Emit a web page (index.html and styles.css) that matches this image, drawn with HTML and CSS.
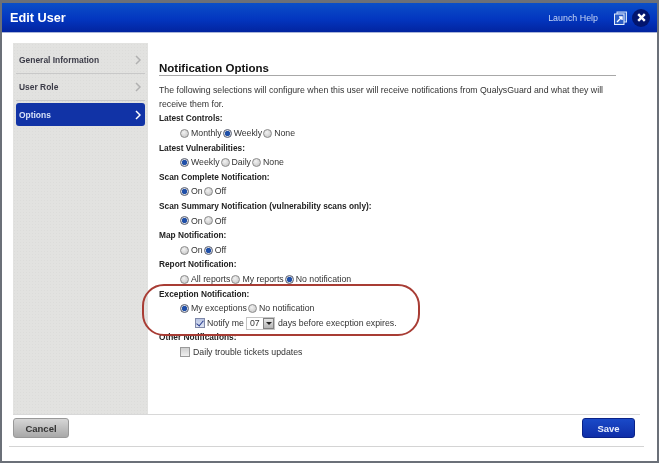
FILE: index.html
```html
<!DOCTYPE html>
<html lang="en">
<head>
<meta charset="utf-8">
<title>Edit User</title>
<link rel="stylesheet" href="styles.css">
</head>
<body>
<div class="window">
  <header class="titlebar">
    <h1 class="title">Edit User</h1>
    <span class="help">Launch Help</span>
    <svg class="popout" width="13" height="14" viewBox="0 0 13 14"><rect x="3" y="1" width="9.5" height="10" fill="#3f6fd0" stroke="#cfe0f8"/><rect x="0.5" y="3" width="9.5" height="10.5" fill="#2a5cc8" stroke="#e6eefc"/><path d="M3 11 L7.5 6.5 M5 6 H8 V9" fill="none" stroke="#fff" stroke-width="1.4"/></svg>
    <span class="close"><svg width="9" height="9" viewBox="0 0 9 9"><path d="M1.2 1.2 L7.8 7.8 M7.8 1.2 L1.2 7.8" stroke="#fff" stroke-width="2.4"/></svg></span>
  </header>
  <div class="main">
    <nav class="sidebar">
      <div class="nav-item"><span>General Information</span><svg class="chev" width="6" height="10" viewBox="0 0 6 10"><path d="M1 1 L5 5 L1 9" fill="none" stroke="#b0b0b0" stroke-width="1.5"/></svg></div>
      <div class="nav-item"><span>User Role</span><svg class="chev" width="6" height="10" viewBox="0 0 6 10"><path d="M1 1 L5 5 L1 9" fill="none" stroke="#b0b0b0" stroke-width="1.5"/></svg></div>
      <div class="nav-item active"><span>Options</span><svg class="chev" width="6" height="10" viewBox="0 0 6 10"><path d="M1 1 L5 5 L1 9" fill="none" stroke="#fff" stroke-width="1.5"/></svg></div>
    </nav>
    <section class="content">
      <h2 class="heading">Notification Options</h2>
      <p class="line intro">The following selections will configure when this user will receive notifications from QualysGuard and what they will</p>
      <p class="line">receive them for.</p>
      <div class="line label">Latest Controls:</div>
      <div class="line opts"><i class="radio"></i>Monthly<i class="radio on"></i>Weekly<i class="radio"></i>None</div>
      <div class="line label">Latest Vulnerabilities:</div>
      <div class="line opts"><i class="radio on"></i>Weekly<i class="radio"></i>Daily<i class="radio"></i>None</div>
      <div class="line label">Scan Complete Notification:</div>
      <div class="line opts"><i class="radio on"></i>On<i class="radio"></i>Off</div>
      <div class="line label">Scan Summary Notification (vulnerability scans only):</div>
      <div class="line opts"><i class="radio on"></i>On<i class="radio"></i>Off</div>
      <div class="line label">Map Notification:</div>
      <div class="line opts"><i class="radio"></i>On<i class="radio on"></i>Off</div>
      <div class="line label">Report Notification:</div>
      <div class="line opts"><i class="radio"></i>All reports<i class="radio"></i>My reports<i class="radio on"></i>No notification</div>
      <div class="line label">Exception Notification:</div>
      <div class="line opts"><i class="radio on"></i>My exceptions<i class="radio"></i>No notification</div>
      <div class="line opts nested"><i class="check on"></i>Notify me<span class="select"><span class="select-value">07</span><span class="select-btn"></span></span>days before execption expires.</div>
      <div class="line label">Other Notifications:</div>
      <div class="line opts"><i class="check"></i>Daily trouble tickets updates</div>
      <div class="highlight"></div>
    </section>
  </div>
  <footer class="footer">
    <button class="btn cancel">Cancel</button>
    <button class="btn save">Save</button>
  </footer>
</div>
</body>
</html>
```
FILE: styles.css
```css
* { box-sizing: border-box; }
html, body { margin: 0; padding: 0; background: #fff; }
body { width: 660px; height: 464px; overflow: hidden; font-family: "Liberation Sans", Arial, sans-serif; color: #333; }
.window { width: 659px; height: 463px; border: solid #6b7078; border-width: 3px 2px 2px 2px; display: flex; flex-direction: column; background: #fff; filter: blur(0.3px); }
.titlebar { height: 30px; flex: none; display: flex; align-items: center; padding: 0 7px 0 8px; background: linear-gradient(#0a4fc8, #0336c0 55%, #02249f); border-bottom: 1px solid #a9b4d8; color: #fff; }
.title { margin: 0; font-size: 12.7px; font-weight: bold; flex: 1; color: #fff; }
.help { font-size: 8.9px; color: #c6d6f4; }
.popout { margin-left: 16px; }
.close { width: 18px; height: 18px; margin-left: 5px; border-radius: 50%; background: #02156e; display: flex; align-items: center; justify-content: center; }
.main { height: 382px; flex: none; display: flex; margin: 0 17px 0 11px; padding-top: 10px; border-bottom: 1px solid #d8d8d8; }
.sidebar { width: 135px; height: 371px; background-color: #e2e2e0; background-image: radial-gradient(#dcdcda 35%, transparent 40%); background-size: 3px 3px; padding: 4px 3px 3px; }
.nav-item { height: 27px; display: flex; align-items: center; justify-content: space-between; padding: 0 4px 0 3px; font-size: 8.45px; font-weight: bold; color: #3c3c48; border-bottom: 1px solid #c8c8c8; }
.nav-item.active { height: 23px; margin-top: 2px; background: #1133a6; color: #d8e2f8; border-radius: 3px; border-bottom: 0; }
.content { position: relative; width: 457px; margin-left: 11px; padding-top: 18px; }
.heading { margin: 0 0 7px; height: 15px; font-size: 11.5px; line-height: 14px; font-weight: bold; color: #111; border-bottom: 1px solid #a8a8a8; }
.line { margin: 0; height: 14.62px; line-height: 14.62px; font-size: 8.75px; color: #333; white-space: nowrap; }
.intro { height: 13.7px; }
.label { font-size: 8.3px; font-weight: bold; color: #222; }
.opts { display: flex; align-items: center; padding-left: 21px; }
.nested { padding-left: 36px; }
.radio { width: 9px; height: 9px; margin: 0 2px 0 1px; flex: none; border-radius: 50%; border: 1px solid #8a8a8a; background: radial-gradient(circle at 40% 35%, #f2f2f2, #c0c0c0); }
.opts > .radio:first-child { margin-left: 0; }
.radio.on { background: radial-gradient(circle, #1f4fa8 0 2.2px, #d4d8e0 3px); border-color: #5a5f70; }
.check { width: 10px; height: 10px; margin-right: 3px; flex: none; border: 1px solid #9a9a9a; background: linear-gradient(#cfcfcf, #f0f0f0); }
.check.on { background: linear-gradient(#b8c4e4, #dfe4f2); border-color: #7f88a8; position: relative; margin-right: 2px; }
.check.on::after { content: ""; position: absolute; left: 2px; top: 0; width: 3px; height: 6px; border: solid #2a3f90; border-width: 0 1.5px 1.5px 0; transform: rotate(40deg); }
.select { display: flex; align-items: center; justify-content: space-between; width: 29px; height: 13px; margin: 0 3px 0 2px; background: #fff; border: 1px solid #c4c4c4; padding: 0 0 0 3px; }
.select-btn { width: 11px; height: 11px; background: linear-gradient(#e6e6e6, #b4b4b4); border: 1px solid #808080; position: relative; }
.select-btn::after { content: ""; position: absolute; left: 2px; top: 3px; border: 3px solid transparent; border-top: 3px solid #222; border-bottom: 0; }
.highlight { position: absolute; left: -17px; top: 241px; width: 278px; height: 52px; border: 2px solid #a83c34; border-radius: 22px; }
.footer { height: 32px; flex: none; display: flex; align-items: flex-start; justify-content: space-between; margin: 0 13px 0 7px; padding: 3px 9px 0 4px; border-bottom: 1px solid #d4d4d4; }
.btn { height: 20px; font-family: inherit; font-size: 9.5px; font-weight: bold; border-radius: 3px; padding: 0; }
.cancel { width: 56px; background: linear-gradient(#d6d6d6, #a8a8a8); border: 1px solid #999; color: #333; }
.save { width: 53px; background: linear-gradient(#1a4ac8, #0f2ea8); border: 1px solid #0a2288; color: #e8eefc; }
```
